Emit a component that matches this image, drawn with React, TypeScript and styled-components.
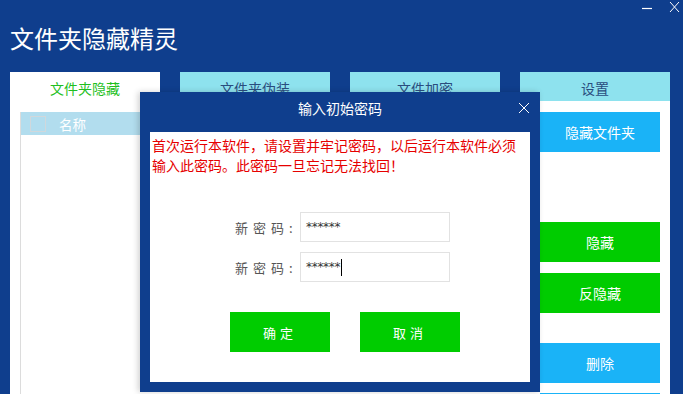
import * as React from 'react';
import styled, { createGlobalStyle } from 'styled-components';

const navy = '#0f3e8d';
const green = '#00cc00';
const sky = '#1ab3f7';
const cyan = '#8ee2ee';

const GlobalStyle = createGlobalStyle`
  html, body {
    margin: 0;
    padding: 0;
    background: ${navy};
    font-family: "Microsoft YaHei", "Noto Sans CJK SC", sans-serif;
    overflow: hidden;
  }
`;

const Window = styled.div`
  position: relative;
  width: 683px;
  height: 394px;
  background: ${navy};
  overflow: hidden;
`;

const Header = styled.div`
  display: flex;
  align-items: flex-start;
  justify-content: space-between;
  height: 72px;
`;

const Title = styled.h1`
  margin: 22px 0 0 10px;
  font-size: 24px;
  font-weight: normal;
  color: #fff;
  line-height: 32px;
`;

const WinControls = styled.div`
  display: flex;
  gap: 16px;
  padding: 1px 3px 0 0;
  color: #fff;
`;

const Tabs = styled.div`
  display: flex;
  gap: 20px;
  padding-left: 10px;
`;

const Tab = styled.div<{ $active?: boolean }>`
  width: 150px;
  height: 29px;
  padding-top: 3px;
  box-sizing: border-box;
  display: flex;
  align-items: center;
  justify-content: center;
  font-size: 14px;
  background: ${(p) => (p.$active ? '#fff' : cyan)};
  color: ${(p) => (p.$active ? '#1fbf1f' : '#2a4d7e')};
`;

const Panel = styled.div`
  display: flex;
  margin: 0 13px 0 10px;
  height: 293px;
  background: #fff;
`;

const ListArea = styled.div`
  flex: 1;
  padding: 11px 20px 0 10px;
`;

const List = styled.div`
  height: 100%;
  border-left: 1px solid #dcdcdc;
`;

const ListHeader = styled.div`
  display: flex;
  align-items: center;
  gap: 13px;
  height: 23px;
  padding-left: 9px;
  background: #b2ddee;
  color: #fff;
  font-size: 13.5px;
`;

const CheckBox = styled.span`
  width: 14px;
  height: 14px;
  border: 1px solid #d0d8dc;
`;

const Actions = styled.div`
  display: flex;
  flex-direction: column;
  width: 120px;
  padding: 11px 10px 0 0;
`;

const ActionButton = styled.div<{ $color: string; $gap?: number }>`
  flex-shrink: 0;
  height: 40px;
  display: flex;
  align-items: center;
  justify-content: center;
  margin-top: ${(p) => p.$gap ?? 0}px;
  background: ${(p) => p.$color};
  color: #fff;
  font-size: 14px;
`;

const Dialog = styled.div`
  position: absolute;
  left: 140px;
  top: 92px;
  width: 400px;
  height: 300px;
  display: flex;
  flex-direction: column;
  background: ${navy};
  box-shadow: -2px 0 6px rgba(0, 0, 0, 0.18);
`;

const DialogBar = styled.div`
  position: relative;
  height: 40px;
  box-sizing: border-box;
  padding-top: 6px;
  display: flex;
  justify-content: center;
  color: #fff;
  font-size: 14px;
  line-height: 20px;
`;

const CloseIcon = styled.svg`
  position: absolute;
  right: 10px;
  top: 10px;
`;

const DialogBody = styled.div`
  flex: 1;
  margin: 0 10px 10px;
  background: #fff;
  display: flex;
  flex-direction: column;
`;

const Notice = styled.p`
  margin: 3px 0 0 2px;
  color: #e60000;
  font-size: 14px;
  line-height: 20px;
  white-space: nowrap;
`;

const Fields = styled.div`
  display: flex;
  flex-direction: column;
  gap: 10px;
  margin-top: 37px;
  padding-left: 85px;
`;

const Field = styled.div`
  display: flex;
  align-items: center;
`;

const Label = styled.span`
  width: 65px;
  color: #555;
  font-size: 13px;
  letter-spacing: 5px;
  white-space: nowrap;
`;

const Input = styled.div`
  width: 143px;
  height: 28px;
  border: 1px solid #e2e2e2;
  display: flex;
  align-items: center;
  padding-left: 5px;
  font-family: "DejaVu Sans", sans-serif;
  font-size: 12px;
  color: #333;
  letter-spacing: -0.3px;
`;

const Caret = styled.span`
  display: inline-block;
  width: 1px;
  height: 17px;
  background: #000;
  margin-left: 1px;
`;

const Buttons = styled.div`
  display: flex;
  gap: 30px;
  margin-top: 30px;
  padding-left: 80px;
`;

const DialogButton = styled.div`
  width: 100px;
  height: 40px;
  display: flex;
  align-items: center;
  justify-content: center;
  background: ${green};
  color: #fff;
  font-size: 13px;
  letter-spacing: 4px;
`;

const App = (): JSX.Element => (
  <Window>
    <GlobalStyle />
    <Header>
      <Title>文件夹隐藏精灵</Title>
      <WinControls>
        <svg width="12" height="12" viewBox="0 0 12 12">
          <path d="M1 7.5h10" stroke="#fff" strokeWidth="1.2" />
        </svg>
        <svg width="11" height="12" viewBox="0 0 11 12">
          <path d="M1 1l9 10M10 1L1 11" stroke="#fff" strokeWidth="1" />
        </svg>
      </WinControls>
    </Header>
    <Tabs>
      <Tab $active>文件夹隐藏</Tab>
      <Tab>文件夹伪装</Tab>
      <Tab>文件加密</Tab>
      <Tab>设置</Tab>
    </Tabs>
    <Panel>
      <ListArea>
        <List>
          <ListHeader>
            <CheckBox />
            名称
          </ListHeader>
        </List>
      </ListArea>
      <Actions>
        <ActionButton $color={sky}>隐藏文件夹</ActionButton>
        <ActionButton $color={green} $gap={70}>隐藏</ActionButton>
        <ActionButton $color={green} $gap={11}>反隐藏</ActionButton>
        <ActionButton $color={sky} $gap={30}>删除</ActionButton>
        <ActionButton $color={sky} $gap={10} />
      </Actions>
    </Panel>
    <Dialog>
      <DialogBar>
        输入初始密码
        <CloseIcon width="12" height="12" viewBox="0 0 12 12">
          <path d="M1 1l10 10M11 1L1 11" stroke="#fff" strokeWidth="1" />
        </CloseIcon>
      </DialogBar>
      <DialogBody>
        <Notice>
          首次运行本软件，请设置并牢记密码，以后运行本软件必须
          <br />
          输入此密码。此密码一旦忘记无法找回！
        </Notice>
        <Fields>
          <Field>
            <Label>新密码:</Label>
            <Input>******</Input>
          </Field>
          <Field>
            <Label>新密码:</Label>
            <Input>
              ******
              <Caret />
            </Input>
          </Field>
        </Fields>
        <Buttons>
          <DialogButton>确定</DialogButton>
          <DialogButton>取消</DialogButton>
        </Buttons>
      </DialogBody>
    </Dialog>
  </Window>
);

export default App;
